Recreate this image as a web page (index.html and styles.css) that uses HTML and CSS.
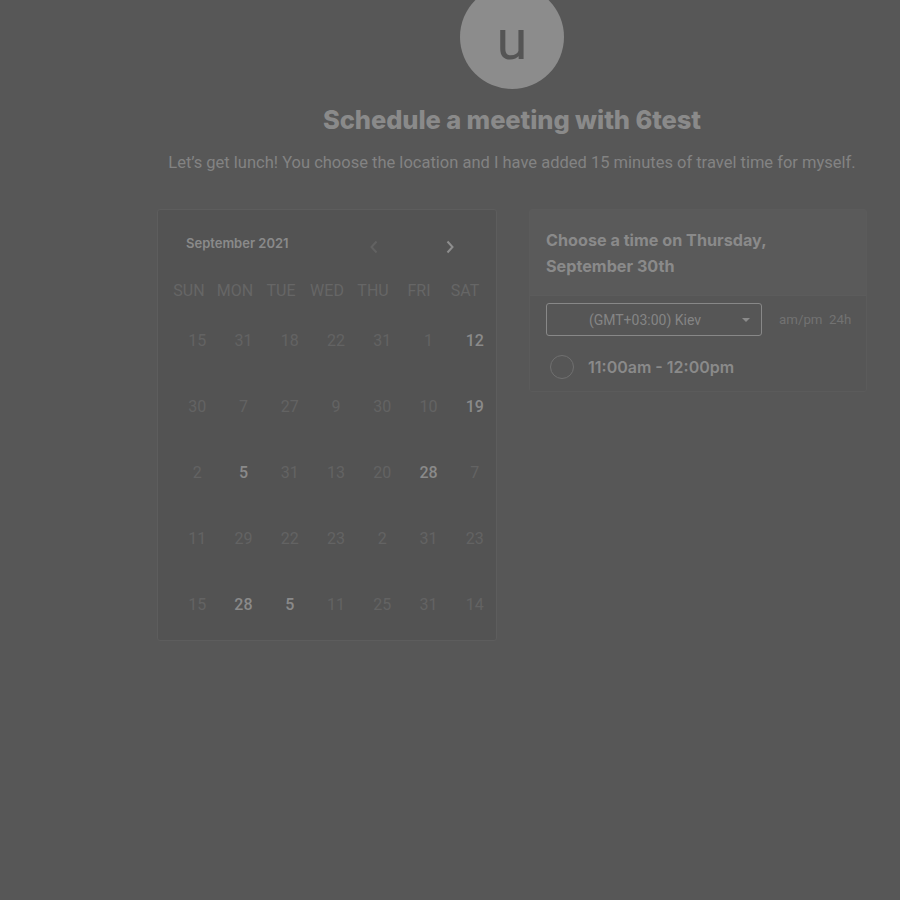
FILE: index.html
```html
<!DOCTYPE html>
<html>
<head>
<meta charset="utf-8">
<link rel="stylesheet" href="styles.css">
</head>
<body>
<div class="page">
  <div class="avatar"><span class="initial">u</span></div>
  <h1 class="title">Schedule a meeting with 6test</h1>
  <p class="subtitle">Let’s get lunch! You choose the location and I have added 15 minutes of travel time for myself.</p>
  <div class="columns">
    <div class="calendar">
      <div class="cal-head">
        <span class="month">September 2021</span>
        <span class="arrow prev"><svg width="10" height="14" viewBox="0 0 10 14"><path d="M7.5 1.5 2.5 7l5 5.5" fill="none" stroke="currentColor" stroke-width="2"/></svg></span>
        <span class="arrow next"><svg width="10" height="14" viewBox="0 0 10 14"><path d="M2.5 1.5 7.5 7l-5 5.5" fill="none" stroke="currentColor" stroke-width="2"/></svg></span>
      </div>
      <div class="weekdays">
        <span>SUN</span><span>MON</span><span>TUE</span><span>WED</span><span>THU</span><span>FRI</span><span>SAT</span>
      </div>
      <div class="dates">
        <span>15</span><span>31</span><span>18</span><span>22</span><span>31</span><span>1</span><span class="on">12</span>
        <span>30</span><span>7</span><span>27</span><span>9</span><span>30</span><span>10</span><span class="on">19</span>
        <span>2</span><span class="on">5</span><span>31</span><span>13</span><span>20</span><span class="on">28</span><span>7</span>
        <span>11</span><span>29</span><span>22</span><span>23</span><span>2</span><span>31</span><span>23</span>
        <span>15</span><span class="on">28</span><span class="on">5</span><span>11</span><span>25</span><span>31</span><span>14</span>
      </div>
    </div>
    <div class="times">
      <div class="times-head">Choose a time on Thursday, September 30th</div>
      <div class="tz-row">
        <div class="tz-select">
          <span>(GMT+03:00) Kiev</span>
          <span class="caret"></span>
        </div>
        <div class="fmt">am/pm&nbsp;&nbsp;24h</div>
      </div>
      <div class="slot">
        <span class="radio"></span>
        <span class="slot-text">11:00am - 12:00pm</span>
      </div>
    </div>
  </div>
</div>
</body>
</html>
```
FILE: styles.css
```css
html, body {
  margin: 0;
  padding: 0;
  background: #575757;
  height: 100%;
}
body {
  font-family: Roboto, "Liberation Sans", sans-serif;
  overflow: hidden;
}
.page {
  margin-left: 124px;
  width: 776px;
  display: flex;
  flex-direction: column;
  align-items: center;
}
.avatar {
  width: 104px;
  height: 104px;
  margin-top: -15px;
  border-radius: 50%;
  background: #8c8c8c;
  display: flex;
  align-items: center;
  justify-content: center;
  padding-top: 6px;
  box-sizing: border-box;
}
.initial {
  color: #555;
  font-family: Roboto, sans-serif;
  font-size: 56px;
  font-weight: 400;
  line-height: 40px;
}
.title {
  margin: 16px 0 0;
  font-family: Inter, sans-serif;
  font-weight: 800;
  font-size: 25.5px;
  line-height: 30px;
  color: #8a8a8a;
  letter-spacing: -0.1px;
}
.subtitle {
  margin: 18px 0 0;
  font-size: 16.5px;
  line-height: 20px;
  color: #838383;
}
.columns {
  margin-top: 36px;
  display: flex;
  gap: 32px;
  align-items: flex-start;
}
.calendar {
  width: 340px;
  height: 432px;
  box-sizing: border-box;
  background: #535353;
  border: 1px solid #5d5d5d;
  border-radius: 3px;
}
.cal-head {
  height: 67px;
  position: relative;
}
.month {
  position: absolute;
  left: 28px;
  top: 25px;
  font-family: Inter, sans-serif;
  font-weight: 600;
  font-size: 13px;
  color: #8a8a8a;
}
.arrow {
  position: absolute;
  top: 30px;
  display: flex;
}
.arrow.prev { left: 211px; color: #626262; }
.arrow.next { left: 287px; color: #8e8e8e; }
.weekdays {
  margin-left: 8px;
  width: 322px;
  height: 26px;
  display: grid;
  grid-template-columns: repeat(7, 1fr);
  align-items: center;
  font-size: 16px;
  color: #666;
  text-align: center;
}
.dates {
  margin-top: 4px;
  margin-left: 16px;
  width: 324px;
  display: grid;
  grid-template-columns: repeat(7, 1fr);
  grid-auto-rows: 66px;
  align-items: center;
  text-align: center;
  font-size: 16px;
  color: #636363;
}
.dates .on {
  color: #8a8a8a;
  font-weight: 500;
}
.times {
  width: 338px;
  box-sizing: border-box;
  border: 1px solid #5b5b5b;
  border-radius: 3px;
  background: #565656;
}
.times-head {
  background: #5a5a5a;
  padding: 17px 50px 16px 16px;
  border-bottom: 1px solid #5c5c5c;
  font-family: Inter, sans-serif;
  font-weight: 700;
  font-size: 16.2px;
  line-height: 26px;
  color: #8a8a8a;
}
.tz-row {
  display: flex;
  align-items: center;
  padding: 7px 16px 7px;
  gap: 17px;
}
.tz-select {
  flex-shrink: 0;
  width: 216px;
  height: 33px;
  box-sizing: border-box;
  border: 1px solid #888;
  border-radius: 3px;
  display: flex;
  align-items: center;
  justify-content: center;
  position: relative;
  font-size: 14px;
  color: #858585;
  padding-right: 18px;
}
.caret {
  position: absolute;
  right: 11px;
  top: 14px;
  border-left: 4px solid transparent;
  border-right: 4px solid transparent;
  border-top: 4px solid #8a8a8a;
}
.fmt {
  font-size: 13.3px;
  color: #727272;
  white-space: nowrap;
}
.slot {
  display: flex;
  align-items: center;
  height: 48px;
  padding-left: 20px;
  gap: 14px;
}
.radio {
  width: 22px;
  height: 22px;
  border: 1.5px solid #707070;
  border-radius: 50%;
}
.slot-text {
  font-family: Inter, sans-serif;
  font-weight: 600;
  font-size: 16px;
  color: #8a8a8a;
}
```
